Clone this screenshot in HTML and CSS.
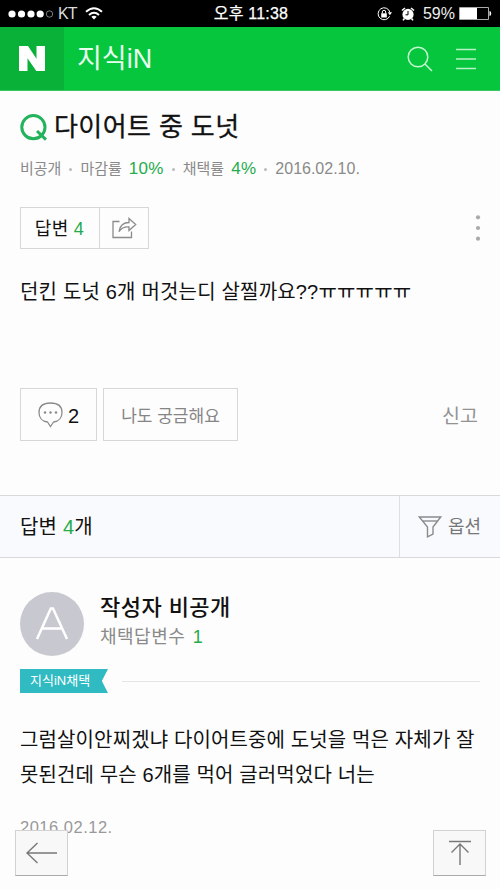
FILE: index.html
```html
<!DOCTYPE html>
<html lang="ko">
<head>
<meta charset="utf-8">
<meta name="viewport" content="width=device-width, initial-scale=1">
<title>지식iN</title>
<link rel="stylesheet" href="styles.css">
</head>
<body>
<div class="status">
  <div class="status-left">
    <svg class="signal" width="46" height="10" viewBox="0 0 46 10"><g fill="#fff"><circle cx="4" cy="5" r="3.6"/><circle cx="13.5" cy="5" r="3.6"/><circle cx="23" cy="5" r="3.6"/><circle cx="32.2" cy="5" r="3.6"/></g><circle cx="41.5" cy="5" r="3.2" fill="none" stroke="#999" stroke-width=".8"/></svg>
    <span class="carrier">KT</span>
    <svg class="wifi" width="18" height="13" viewBox="0 0 18 13"><g fill="none" stroke="#fff" stroke-width="2"><path d="M1 4.8Q9-2.4 17 4.8"/><path d="M4 8Q9 3.6 14 8"/></g><path d="M6.3 9.8Q9 7.8 11.7 9.8L9 12.5Z" fill="#fff"/></svg>
  </div>
  <div class="clock">오후 11:38</div>
  <div class="status-right">
    <svg class="lock" width="15" height="14" viewBox="0 0 15 14"><path d="M12.6 9.2A6 6 0 1 1 12.9 5.2" fill="none" stroke="#fff"/><path d="M10.8 5.3h4.2l-2.1 3z" fill="#fff"/><path d="M4.2 6.3h5.6v4.2H4.2z" fill="#fff"/><path d="M5.3 6.5V5a1.7 1.7 0 0 1 3.4 0v1.5" fill="none" stroke="#fff"/></svg>
    <svg class="alarm" width="14" height="14" viewBox="0 0 14 14"><circle cx="7" cy="7.4" r="5.6" fill="#fff"/><path d="M1 3.5L4 1M13 3.5L10 1M3.4 11.5L2 13.4M10.6 11.5L12 13.4" stroke="#fff" stroke-width="1.6"/><path d="M7 4v3.8H4.5" fill="none" stroke="#000"/></svg>
    <span class="percent">59%</span>
    <svg class="battery" width="33" height="14" viewBox="0 0 33 14"><path d="M.5.5h29v12H.5z" fill="none" stroke="#aaa"/><path d="M1 1h17v11H1z" fill="#fff"/><path d="M31 4.5q1.5 2 0 4z" fill="#fff" stroke="#fff"/></svg>
  </div>
</div>
<header class="header">
  <a class="logo"><svg width="26" height="25" viewBox="0 0 26 25"><path d="M0 0h9l8.5 12.8V0H26v25h-8.7L8.5 12.2V25H0z" fill="#fff"/></svg></a>
  <h1 class="service">지식iN</h1>
  <svg class="search" width="26" height="26" viewBox="0 0 26 26"><g fill="none" stroke="#c4f8d2" stroke-width="1.5"><circle cx="11" cy="11" r="9.8"/><path d="M18 18l7 7"/></g></svg>
  <svg class="menu" width="20" height="22" viewBox="0 0 20 22"><path d="M0 1.5h20M0 11h20M0 20.5h20" stroke="#b5f4c6" stroke-width="1.5"/></svg>
</header>
<main>
  <section class="question">
    <div class="title-row">
      <svg class="q-mark" width="28" height="28" viewBox="0 0 28 28"><g fill="none" stroke="#23b35c" stroke-width="3"><circle cx="13.4" cy="13.2" r="11.6"/><path d="M17 17l9 8.7"/></g></svg>
      <h2 class="title">다이어트 중 도넛</h2>
    </div>
    <div class="meta"><span>비공개</span><i class="dot"></i><span>마감률</span><b>10%</b><i class="dot"></i><span>채택률</span><b>4%</b><i class="dot"></i><span class="date">2016.02.10.</span></div>
    <div class="tools">
      <div class="group">
        <a class="answer-btn">답변 <em>4</em></a>
        <a class="share-btn"><svg width="25" height="22" viewBox="0 0 25 22"><g fill="none" stroke="#8b8b8b" stroke-width="1.3"><path d="M7.5 4.5H1v16h18.500v-6"/><path d="M7 14.500C8 8.500 11 5.500 17 5.500V1.500L23.700 7.500 17 13.500V10C12.500 9.500 9.500 11 7 14.500Z"/></g></svg></a>
      </div>
      <svg class="more" width="6" height="26" viewBox="0 0 6 26"><g fill="#aaa"><circle cx="3" cy="2.300" r="2.100"/><circle cx="3" cy="13" r="2.100"/><circle cx="3" cy="23.700" r="2.100"/></g></svg>
    </div>
    <p class="question-text">던킨 도넛 6개 머것는디 살찔까요??ㅠㅠㅠㅠㅠ</p>
    <div class="actions">
      <a class="comment-btn"><svg width="25" height="26" viewBox="0 0 25 26"><path d="M9.500 20C4 19.500 1 15.500 1 10.500 1 4.500 5 1 12.500 1S24 4.500 24 10.500C24 15.500 21 19.500 15.500 20L12.500 24.500Z" fill="none" stroke="#8b8b8b" stroke-width="1.300"/><g fill="#888"><circle cx="7" cy="10.500" r="1.200"/><circle cx="12.500" cy="10.500" r="1.200"/><circle cx="18" cy="10.500" r="1.200"/></g></svg><span>2</span></a>
      <a class="curious-btn">나도 궁금해요</a>
      <a class="report">신고</a>
    </div>
  </section>
  <div class="answer-bar">
    <h3 class="answer-count">답변 <em>4</em>개</h3>
    <a class="option"><svg width="24" height="22" viewBox="0 0 24 22"><g fill="none" stroke="#8b8b8b" stroke-width="1.400"><path d="M1.300 1H22.700L15 11V18L9.500 20.800V11Z"/><path d="M4.500 5h15"/></g></svg><span>옵션</span></a>
  </div>
  <article class="answer">
    <div class="author">
      <svg class="avatar" width="64" height="64" viewBox="0 0 64 64"><circle cx="32" cy="32" r="32" fill="#c8c8d0"/><path d="M17 47L30.800 16.500H33L47 47M22 36.500H42" fill="none" stroke="#fff" stroke-width="2.500"/></svg>
      <div class="author-info"><strong>작성자 비공개</strong><p>채택답변수 <em>1</em></p></div>
    </div>
    <div class="adopted"><span class="ribbon">지식iN채택</span><i class="rule"></i></div>
    <p class="answer-text">그럼살이안찌겠냐 다이어트중에 도넛을 먹은 자체가 잘<br>못된건데 무슨 6개를 먹어 글러먹었다 너는</p>
    <p class="answer-date">2016.02.12.</p>
  </article>
</main>
<nav class="floating">
  <a><svg width="32" height="22" viewBox="0 0 32 22"><path d="M31 11H1M11.500 1L1 11L11.500 21" fill="none" stroke="#777" stroke-width="1.400"/></svg></a>
  <a><svg width="22" height="26" viewBox="0 0 22 26"><path d="M0 1.500H22M11 25V4M2.500 12.500L11 4L19.500 12.500" fill="none" stroke="#777" stroke-width="1.400"/></svg></a>
</nav>
</body>
</html>
```
FILE: styles.css
```css
* { box-sizing: border-box; }
html, body { margin: 0; height: 889px; overflow: hidden; }
body {
  position: relative;
  background: #fdfdfd;
  color: #111;
  font-family: "Liberation Sans", "Noto Sans CJK KR", sans-serif;
}
h1, h2, h3, p { margin: 0; font-weight: 400; }
em, i { font-style: normal; }
em { color: #25ab4c; }
svg { display: block; flex: none; }
span, a, h1, h2, h3, p, strong { white-space: nowrap; }

.status {
  display: grid;
  grid-template-columns: 1fr auto 1fr;
  align-items: center;
  height: 27px;
  padding: 0 8px 0 8px;
  background: #000;
  color: #eee;
}
.status-left, .status-right { display: flex; align-items: center; }
.status-right { justify-content: flex-end; }
.carrier { margin-left: 4px; font-size: 16px; letter-spacing: -.8px; color: #ddd; }
.wifi { margin-left: 8px; }
.clock { padding-left: 2px; font-size: 16px; line-height: 26px; letter-spacing: .2px; color: #fff; -webkit-text-stroke: .25px #fff; }
.alarm { margin-left: 9px; }
.percent { margin-left: 8px; font-size: 16px; }
.battery { margin-left: 4px; }

.header {
  display: flex;
  align-items: center;
  height: 64px;
  background: #06c63d;
  border-bottom: 1px solid #38c761;
}
.logo {
  display: flex;
  align-items: center;
  justify-content: center;
  width: 64px;
  height: 63px;
  background: #0ab139;
}
.service { margin-left: 13px; color: #e9fff0; font-size: 27px; line-height: 40px; }
.search { margin-left: auto; }
.menu { margin: 0 24px 0 23px; }

.question { height: 404px; padding: 16px 20px 0; }
.title-row { display: flex; align-items: center; height: 40px; }
.q-mark { margin-top: 1px; }
.title { margin-left: 6px; font-size: 26px; line-height: 40px; letter-spacing: .4px; -webkit-text-stroke: .3px #111; }
.meta {
  display: flex;
  align-items: center;
  height: 24px;
  margin-top: 10px;
  font-size: 15px;
  line-height: 24px;
  color: #8a8a8a;
}
.meta b { margin-left: 7px; font-size: 17px; font-weight: 400; letter-spacing: .3px; color: #25ab4c; }
.meta .date { font-size: 16px; }
.dot { width: 3px; height: 3px; margin: 0 8px; border-radius: 50%; background: #bbb; }
.tools { display: flex; align-items: center; justify-content: space-between; margin-top: 26px; height: 42px; }
.group { display: flex; height: 42px; border: 1px solid #d7d7d7; }
.answer-btn { width: 79px; padding-right: 1px; border-right: 1px solid #d7d7d7; text-align: center; font-size: 18px; line-height: 43px; letter-spacing: .3px; }
.share-btn { display: flex; align-items: center; justify-content: center; width: 48px; }
.more { margin: 0 -1px 0 0; }
.question-text { margin-top: 27px; font-size: 20px; line-height: 32px; letter-spacing: .18px; }
.actions { display: flex; align-items: center; height: 53px; margin-top: 80px; }
.comment-btn, .curious-btn { display: flex; align-items: center; justify-content: center; height: 53px; border: 1px solid #d7d7d7; }
.comment-btn { width: 77px; gap: 5px; font-size: 20px; }
.comment-btn span { padding-top: 3px; }
.curious-btn { width: 135px; margin-left: 6px; font-size: 17px; color: #858585; }
.report { margin-left: auto; padding-right: 2px; font-size: 19.5px; color: #939393; }

.answer-bar {
  display: flex;
  height: 63px;
  border-top: 1px solid #d9d9dc;
  border-bottom: 1px solid #d9d9dc;
  background: #f9fafd;
}
.answer-count { flex: 1; padding-left: 20px; font-size: 20px; line-height: 62px; letter-spacing: .2px; }
.option { display: flex; align-items: center; width: 101px; padding-left: 18px; border-left: 1px solid #dedee1; font-size: 18px; color: #777; }
.option span { margin: -3px 0 0 6px; }

.answer { padding: 34px 20px 0; }
.author { display: flex; height: 64px; }
.author-info { margin-left: 16px; }
.author strong { display: block; font-size: 22px; font-weight: 500; line-height: 32px; letter-spacing: .45px; }
.author p { font-size: 18px; line-height: 26px; letter-spacing: .5px; word-spacing: 2px; color: #8a8a8a; }
.adopted { display: flex; align-items: center; justify-content: space-between; height: 24px; margin-top: 13px; }
.ribbon {
  width: 88px;
  height: 24px;
  padding-left: 10px;
  background: #30bbc2;
  clip-path: polygon(0 0, 100% 0, 93% 50%, 100% 100%, 0 100%);
  color: #fff;
  font-size: 13px;
  line-height: 24px;
}
.rule { width: 358px; height: 1px; background: #e5e5e5; }
.answer-text { margin-top: 30px; font-size: 20px; line-height: 35px; letter-spacing: .13px; }
.answer-date { margin-top: 22px; font-size: 16.500px; line-height: 24px; letter-spacing: .5px; color: #999; }

.floating { position: absolute; left: 15px; right: 14px; bottom: 13px; display: flex; justify-content: space-between; }
.floating a {
  display: flex;
  align-items: center;
  justify-content: center;
  width: 53px;
  height: 46px;
  border: 1px solid #d2d2d2;
  border-bottom-color: #aaa;
  background: #f8f8f8;
}
```
